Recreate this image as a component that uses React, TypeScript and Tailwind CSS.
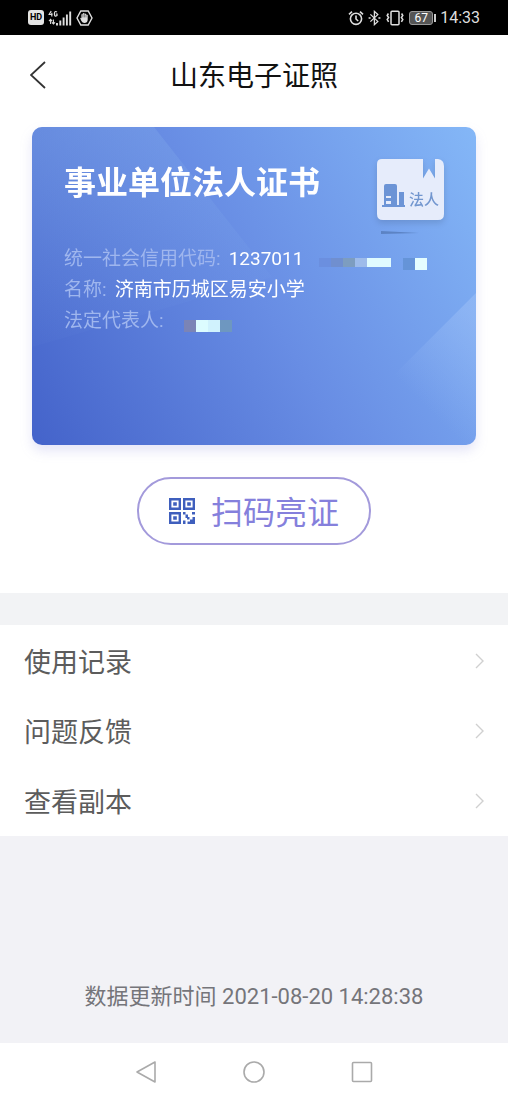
import type { ReactNode } from "react";
import clsx from "clsx";

const menuItems = [
  { id: "records", label: "使用记录" },
  { id: "feedback", label: "问题反馈" },
  { id: "copy", label: "查看副本" },
];

const codeMask = [
  "h-[9px] bg-[#6b8fdf]",
  "h-[9px] bg-[#708fcf]",
  "h-[9px] bg-[#7d9dc0]",
  "h-[9px] bg-[#9dbbea]",
  "h-[9px] bg-[#e0fbff]",
  "h-[9px] bg-[#e0fbff]",
  "h-[9px] bg-transparent",
  "h-[12px] bg-[#6594d8]",
  "h-[12px] bg-[#e4fdff]",
];

const nameMask = [
  "h-[12px] bg-[#7b84b6]",
  "h-[12px] bg-[#dcfcff]",
  "h-[12px] bg-[#d0f2fd]",
  "h-[12px] bg-[#6e97c0]",
];

function Mask({ blocks, className }: { blocks: string[]; className?: string }) {
  return (
    <span aria-hidden="true" className={clsx("flex items-start pt-2", className)}>
      {blocks.map((block, i) => (
        <span key={i} className={clsx("w-3", block)} />
      ))}
    </span>
  );
}

function StatusBar() {
  return (
    <div className="flex h-[35px] items-center justify-between bg-black pr-7 pl-7 text-[#dedede]">
      <div className="flex items-center gap-1">
        <span className="flex h-[15px] w-4 items-center justify-center rounded-[3px] bg-[#e4e4e4] text-[9px] font-bold text-black">
          HD
        </span>
        <svg width="24" height="18" viewBox="0 0 24 18" fill="none" stroke="currentColor">
          <path d="M3.2 2 1.2 5.5H4.6M3.8 3.8V7.5" strokeWidth="1.2" />
          <path d="M9 3Q6.4 1.4 6.4 4.8T9 6.6V5H7.8" strokeWidth="1.2" />
          <path d="M2.6 15V10.5M1 12.2 2.6 10.4 4 12.2M5.4 10.5V15M4 13.3 5.4 15 7 13.3" strokeWidth="1.1" />
          <path d="M9 16.5V14M12.3 16.5V11.5M15.6 16.5V8.5M18.9 16.5V5.5M22.2 16.5V2.5" strokeWidth="1.9" />
        </svg>
        <svg width="17" height="16" viewBox="0 0 17 16" fill="none">
          <path d="M4.8 1H12.2L16 8 12.2 15H4.8L1 8Z" stroke="currentColor" strokeWidth="1.4" />
          <path
            d="M4.2 8.2Q4.6 7.4 5.4 8.2V4.4Q6 3.6 6.7 4.4V3.5Q7.5 2.7 8.3 3.5V3.8Q9.2 3 10 3.9V4.8Q11 4.2 11.7 5V9.8Q11.4 13 8.4 13 6.4 13 5.4 11Z"
            fill="currentColor"
          />
          <path d="M6.9 4.5V7.4M8.4 4V7.4M10 4.8V7.4" stroke="#222" strokeWidth=".5" />
        </svg>
      </div>
      <div className="flex items-center gap-1">
        <svg width="16" height="16" viewBox="0 0 16 16" fill="none" stroke="currentColor" strokeWidth="1.6">
          <circle cx="8" cy="8.8" r="5.6" />
          <path d="M8 5.6V9L10.2 11M1 4.4 4 1.6M15 4.4 12 1.6" />
        </svg>
        <svg width="13" height="16" viewBox="0 0 13 16" fill="none" stroke="currentColor" strokeWidth="1.3">
          <path d="M2.4 4.4 9.8 11.4 6.4 14.6V1.4L9.8 4.6 2.4 11.6" />
          <path d="M.6 8H2.6M10.4 8H12.4" strokeWidth="1.6" />
        </svg>
        <svg width="20" height="16" viewBox="0 0 20 16" fill="none" stroke="currentColor" strokeWidth="1.5">
          <rect x="6" y="1.2" width="8" height="13.6" rx="1" />
          <path d="M3.4 3.5 2.2 5.5 3.6 7.5 2.2 9.5 3.6 11.8M16.6 3.5 17.8 5.5 16.4 7.5 17.8 9.5 16.4 11.8" />
        </svg>
        <span className="flex items-center gap-px">
          <span className="flex h-[14px] w-6 items-center justify-center rounded-[3px] border border-[#999] bg-[#555] text-[12px] leading-3 text-white">
            67
          </span>
          <span className="h-2 w-[2px] bg-[#ccc]" />
        </span>
        <span className="text-[16px]">14:33</span>
      </div>
    </div>
  );
}

function LegalPersonBadge() {
  return (
    <div className="relative h-[76px] w-[67px] shrink-0">
      <svg className="absolute inset-0 overflow-visible drop-shadow-md" width="67" height="61" viewBox="0 0 67 61">
        <path
          d="M5 0H46V19.5L52 9.5 58 19.5V0H61Q67 1 67 7V55Q67 61 61 61H6Q0 61 0 55V5Q0 0 5 0Z"
          fill="#e6ecfb"
        />
        <path
          fillRule="evenodd"
          d="M5 48V46H7V27Q7 25 9 25H18Q20 25 20 27V46H22V33H27V46H28V48ZM9 37V39H14V37ZM9 42V45H14V42Z"
          fill="#6c94d6"
        />
      </svg>
      <svg className="absolute bottom-0 left-1" width="38" height="4" viewBox="0 0 38 4">
        <path d="M0 0 38 2 0 3Z" fill="#5c83c4" />
      </svg>
      <span className="absolute top-8 left-8 text-[15px] leading-[18px] font-medium text-[#7296cf]">法人</span>
    </div>
  );
}

function Field({ label, children }: { label: string; children?: ReactNode }) {
  return (
    <div className="flex h-[31px] items-center gap-2">
      <dt className="text-[#9fb6ee]">{label}:</dt>
      <dd className="flex items-center text-white">{children}</dd>
    </div>
  );
}

function CertificateCard() {
  return (
    <section className="relative mx-8 mt-3 h-[318px] overflow-hidden rounded-[10px] bg-linear-[60deg] from-[#4463ca] via-[#688de4] to-[#84b7f7]">
      {/* Diagonal light bands */}
      <svg className="absolute inset-0 h-full w-full" viewBox="0 0 444 318" preserveAspectRatio="none">
        <defs>
          <linearGradient id="band" x1=".3" y1="0" x2=".5" y2="1">
            <stop offset="0" stopColor="#86b0ec" stopOpacity=".3" />
            <stop offset="1" stopColor="#86b0ec" stopOpacity="0" />
          </linearGradient>
          <linearGradient id="corner" gradientUnits="userSpaceOnUse" x1="444" y1="190" x2="374" y2="260">
            <stop offset="0" stopColor="#a2c3f8" stopOpacity=".45" />
            <stop offset="1" stopColor="#a2c3f8" stopOpacity="0" />
          </linearGradient>
        </defs>
        <path d="M0 0H122L240 150 0 220Z" fill="url(#band)" />
        <path d="M444 166V318H292Z" fill="url(#corner)" />
      </svg>
      <div className="relative px-8 pt-8">
        <div className="flex h-[85px] justify-between">
          <h2 className="pt-[2px] text-[32px] leading-[44px] font-bold text-white">事业单位法人证书</h2>
          <LegalPersonBadge />
        </div>
        <dl className="text-[19px]">
          <Field label="统一社会信用代码">
            1237011
            <Mask blocks={codeMask} className="pl-4" />
          </Field>
          <Field label="名称">济南市历城区易安小学</Field>
          <Field label="法定代表人">
            <Mask blocks={nameMask} className="pl-3" />
          </Field>
        </dl>
      </div>
    </section>
  );
}

function QrIcon() {
  return (
    <svg width="26" height="26" viewBox="0 0 26 26" fill="#3f5fbd">
      <path
        fillRule="evenodd"
        d="M0 0H12V12H0ZM2.4 2.4V9.6H9.6V2.4ZM14 0H26V12H14ZM16.4 2.4V9.6H23.6V2.4ZM0 14H12V26H0ZM2.4 16.4V23.6H9.6V16.4Z"
      />
      <path d="M4.2 4.2H7.8V7.8H4.2ZM18.2 4.2H21.8V7.8H18.2ZM4.2 18.2H7.8V21.8H4.2Z" />
      <path d="M14 14H16.5V16.5H14ZM16.5 16.5H19V19H20.5V21.5H18V20H16.5ZM23 14H26V16.5H23ZM14 22.5H16.5V26H14ZM23.5 19H26V26H18.5V23.5H21V21.5H23.5Z" />
    </svg>
  );
}

export default function App() {
  return (
    <div className="flex min-h-screen flex-col bg-white font-[Roboto,'Noto_Sans_CJK_SC',sans-serif]">
      <StatusBar />

      {/* Header */}
      <header className="grid h-20 grid-cols-[80px_1fr_80px] items-center">
        <button type="button" aria-label="返回" className="flex h-full items-center pl-[30px]">
          <svg width="16" height="28" viewBox="0 0 16 28" fill="none" stroke="#333" strokeWidth="1.8">
            <path d="M15 1 1 14 15 27" />
          </svg>
        </button>
        <h1 className="pt-1 text-center text-[28px] leading-10 text-[#111]">山东电子证照</h1>
      </header>

      <main className="flex flex-1 flex-col">
        <div className="drop-shadow-[0_6px_6px_rgba(110,110,210,0.18)]">
          <CertificateCard />
        </div>
        <div className="flex justify-center pt-8 pb-12">
          <button
            type="button"
            className="flex h-[68px] items-center gap-4 rounded-full border-2 border-[#a39adb] px-[30px] text-[32px] text-[#8580dc]"
          >
            <QrIcon />
            <span className="pt-1">扫码亮证</span>
          </button>
        </div>

        {/* Menu */}
        <nav className="border-t-[32px] border-[#f2f3f5] pt-px">
          {menuItems.map((item) => (
            <button
              key={item.id}
              type="button"
              className="flex h-[70px] w-full items-center justify-between pr-6 pl-6 text-[27px] text-[#5c5c5c]"
            >
              <span className="pt-1">{item.label}</span>
              <svg width="9" height="16" viewBox="0 0 9 16" fill="none" stroke="#d0d0d0" strokeWidth="1.4">
                <path d="M1 1 8 8 1 15" />
              </svg>
            </button>
          ))}
        </nav>

        <div className="flex flex-1 items-end justify-center bg-[#f2f2f6] pb-[30px]">
          <p className="text-[22px] leading-8 text-[#75757a]">数据更新时间 2021-08-20 14:28:38</p>
        </div>
      </main>

      {/* System navigation */}
      <footer className="flex h-[58px] items-center justify-center gap-[86px] text-[#aaa]">
        <button type="button" aria-label="后退">
          <svg width="22" height="22" viewBox="0 0 22 22" fill="none" stroke="currentColor" strokeWidth="1.6" strokeLinejoin="round">
            <path d="M20 1V21L2 11Z" />
          </svg>
        </button>
        <button type="button" aria-label="主页">
          <svg width="22" height="22" viewBox="0 0 22 22" fill="none" stroke="currentColor" strokeWidth="1.6">
            <circle cx="11" cy="11" r="10" />
          </svg>
        </button>
        <button type="button" aria-label="最近任务">
          <svg width="22" height="22" viewBox="0 0 22 22" fill="none" stroke="currentColor" strokeWidth="1.6">
            <rect x="1.5" y="1.5" width="19" height="19" rx="1" />
          </svg>
        </button>
      </footer>
    </div>
  );
}
